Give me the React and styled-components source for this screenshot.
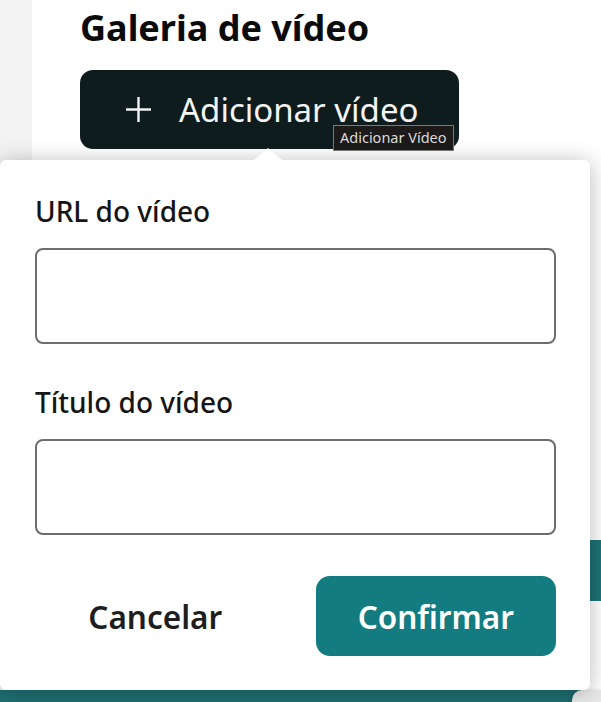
import React from 'react';
import styled, { createGlobalStyle } from 'styled-components';

const GlobalStyle = createGlobalStyle`
  html, body {
    margin: 0;
    padding: 0;
    background: #ffffff;
  }
  body {
    font-family: "Noto Sans", "Open Sans", sans-serif;
    overflow: hidden;
  }
  * {
    box-sizing: border-box;
  }
`;

const Page = styled.div`
  position: relative;
  width: 601px;
  height: 702px;
  display: flex;
  flex-direction: column;
`;

const Body = styled.div`
  display: flex;
  flex: 1;
`;

const Sidebar = styled.div`
  width: 32px;
  background: #f3f3f3;
`;

const Main = styled.div`
  flex: 1;
  display: flex;
  flex-direction: column;
  align-items: flex-start;
  padding: 6px 0 0 48px;
`;

const Heading = styled.h2`
  margin: 0;
  font-size: 36px;
  line-height: 44px;
  font-weight: 700;
  color: #0b0b0b;
`;

const AddButton = styled.button`
  position: relative;
  margin-top: 20px;
  width: 379px;
  height: 79px;
  display: flex;
  align-items: center;
  gap: 27px;
  padding: 0 0 0 45px;
  border: none;
  border-radius: 13px;
  background: #0f1c1e;
  color: #f4f4f4;
  font-family: inherit;
  font-size: 33px;
  font-weight: 400;
  cursor: pointer;
`;

const Tooltip = styled.span`
  position: absolute;
  left: 253px;
  top: 55px;
  padding: 2px 6px 3px;
  background: #1d1a1a;
  border: 1px solid #7a7a7a;
  color: #dcdcdc;
  font-size: 14.5px;
  line-height: 19px;
  white-space: nowrap;
`;

const UnderRow = styled.div`
  align-self: stretch;
  display: flex;
  justify-content: flex-end;
  margin-top: 391px;
`;

const UnderBlock = styled.div`
  width: 40px;
  height: 61px;
  background: #1d7275;
`;

const Footer = styled.div`
  height: 12px;
  display: flex;
  background: #1f6f72;
`;

const FooterEnd = styled.div`
  margin-left: auto;
  width: 29px;
  background: #e9e9e9;
  border-top-left-radius: 10px;
  box-shadow: -2px 0 4px rgba(0, 0, 0, 0.15);
`;

const Popover = styled.div`
  position: absolute;
  left: 0;
  top: 160px;
  width: 590px;
  height: 530px;
  background: #ffffff;
  border-radius: 6px;
  box-shadow: 0 2px 22px rgba(0, 0, 0, 0.28);
  padding: 32px 34px 0 35px;
  display: flex;
  flex-direction: column;

  &::before {
    content: '';
    position: absolute;
    left: 254px;
    top: -12px;
    border-left: 14px solid transparent;
    border-right: 14px solid transparent;
    border-bottom: 12px solid #ffffff;
  }
`;

const Field = styled.label`
  display: flex;
  flex-direction: column;
  gap: 18px;
  margin-bottom: ${(p) => p.$gap || 0}px;
`;

const LabelText = styled.span`
  font-size: 28px;
  line-height: 38px;
  font-weight: 500;
  color: #151515;
`;

const Input = styled.input`
  height: 96px;
  width: 100%;
  border: 2px solid #6d6d6d;
  border-radius: 8px;
  padding: 0 16px;
  font-family: inherit;
  font-size: 24px;
  outline: none;
`;

const Actions = styled.div`
  display: grid;
  grid-template-columns: 1fr 1fr;
  gap: 40px;
  margin-top: 41px;
`;

const ActionButton = styled.button`
  height: 80px;
  border: none;
  border-radius: 14px;
  font-family: inherit;
  font-size: 31.5px;
  font-weight: 600;
  background: ${(p) => (p.$primary ? '#137c80' : 'transparent')};
  color: ${(p) => (p.$primary ? '#ffffff' : '#1e1e1e')};
  cursor: pointer;
`;

const PlusIcon = () => (
  <svg width="27" height="27" viewBox="0 0 27 27" fill="none" stroke="#f4f4f4" strokeWidth="2.4">
    <path d="M13.5 1v25M1 13.5h25" />
  </svg>
);

export default function App() {
  return (
    <Page>
      <GlobalStyle />
      <Body>
        <Sidebar />
        <Main>
          <Heading>Galeria de vídeo</Heading>
          <AddButton>
            <PlusIcon />
            <span>Adicionar vídeo</span>
            <Tooltip>Adicionar Vídeo</Tooltip>
          </AddButton>
          <UnderRow>
            <UnderBlock />
          </UnderRow>
        </Main>
      </Body>
      <Footer>
        <FooterEnd />
      </Footer>
      <Popover>
        <Field $gap={39}>
          <LabelText>URL do vídeo</LabelText>
          <Input type="text" />
        </Field>
        <Field>
          <LabelText>Título do vídeo</LabelText>
          <Input type="text" />
        </Field>
        <Actions>
          <ActionButton>Cancelar</ActionButton>
          <ActionButton $primary>Confirmar</ActionButton>
        </Actions>
      </Popover>
    </Page>
  );
}
